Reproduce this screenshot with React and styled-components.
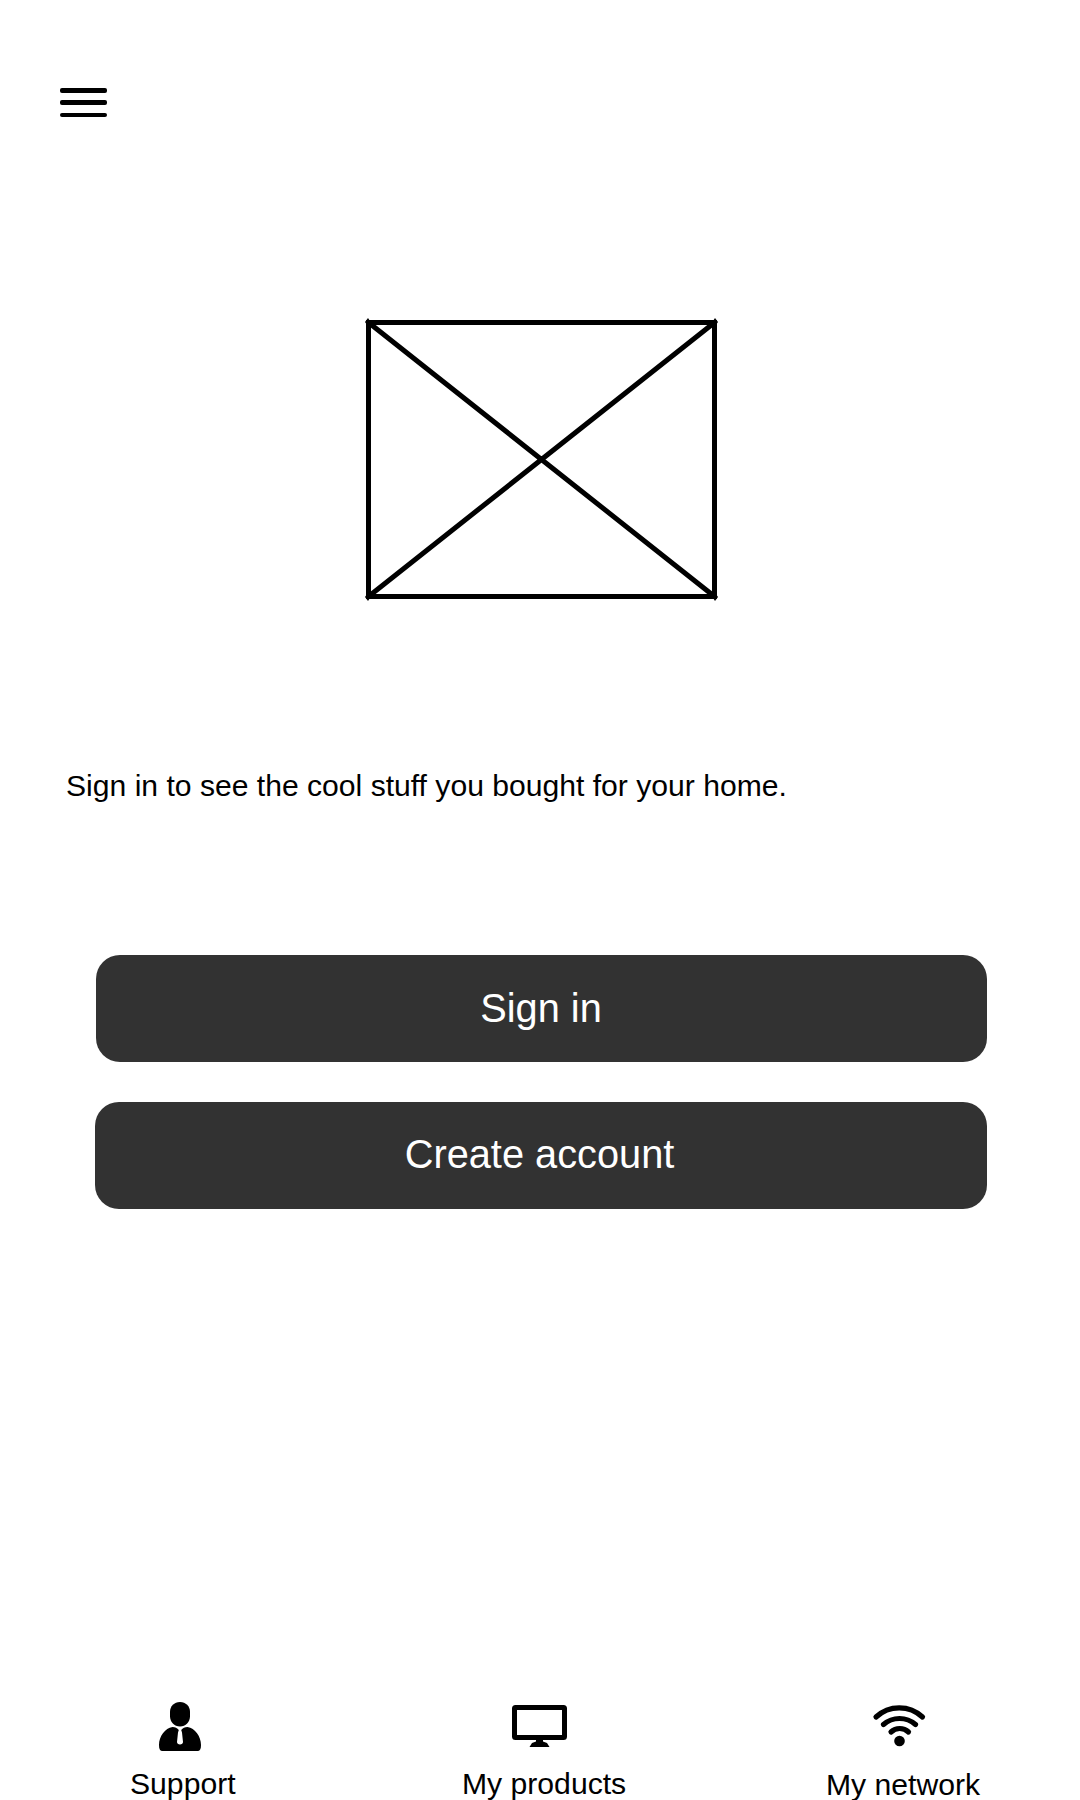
import React from "react";
import styled, { createGlobalStyle } from "styled-components";

const GlobalStyle = createGlobalStyle`
  * { box-sizing: border-box; }
  body {
    margin: 0;
    background: #fff;
    color: #000;
    font-family: "Liberation Sans", Arial, sans-serif;
  }
`;

const Screen = styled.div`
  width: 1080px;
  height: 1800px;
  display: flex;
  flex-direction: column;
  overflow: hidden;
  background: #fff;
`;

const Header = styled.header`
  padding: 88px 60px 0;
  height: 318px;
`;

const MenuButton = styled.button`
  display: block;
  padding: 0;
  border: 0;
  background: none;
`;

const Drawing = styled.svg`
  display: block;
  flex: none;
  overflow: visible;
`;

const Main = styled.main`
  flex: 1;
  display: flex;
  flex-direction: column;
`;

const Hero = styled.div`
  padding-left: 366px;
  height: 451px;
`;

const Message = styled.p`
  margin: 0;
  padding-left: 66px;
  height: 186px;
  font-size: 30.12px;
  line-height: 34px;
  white-space: nowrap;
`;

const Actions = styled.div`
  display: flex;
  flex-direction: column;
  align-items: flex-end;
  gap: 40px;
  padding-right: 93px;
`;

const ActionButton = styled.button`
  width: ${(p) => p.$width}px;
  height: 107px;
  padding: 0 ${(p) => p.$inset}px ${(p) => p.$lift}px 0;
  border: 0;
  border-radius: 24px;
  background: #323232;
  color: #fff;
  font-family: inherit;
  font-size: 39.75px;
  line-height: 46px;
`;

const Nav = styled.nav`
  display: grid;
  grid-template-columns: 332px 364px auto;
  height: 98px;
  padding-left: 130px;
`;

const NavItem = styled.div`
  display: flex;
  flex-direction: column;
  align-items: flex-start;
`;

const NavIcon = styled.div`
  height: 65px;
  padding-top: ${(p) => p.$top || 0}px;
  margin-left: ${(p) => p.$indent}px;
`;

const NavLabel = styled.span`
  font-size: 30.15px;
  line-height: 34px;
  white-space: nowrap;
  margin-top: ${(p) => p.$drop || 0}px;
`;

const MenuIcon = () => (
  <Drawing width="47" height="30" viewBox="0 0 47 30">
    <rect x="0" y="0" width="47" height="5" rx="2" />
    <rect x="0" y="12" width="47" height="5" rx="2" />
    <rect x="0" y="25" width="47" height="4" rx="2" />
  </Drawing>
);

const Placeholder = () => (
  <Drawing width="351" height="281" viewBox="366 318 351 281" fill="none" stroke="#000" strokeWidth="5">
    <rect x="368.5" y="322.5" width="346" height="274" />
    <path d="M368.5 322.5 714.5 596.5M714.5 322.5 368.5 596.5" strokeWidth="5" />
    <path
      d="M368 318 370 321 367 325 365 322ZM715 318 713 321 716 325 718 322ZM368 601 370 598 367 594 365 597ZM715 601 713 598 716 594 718 597Z"
      fill="#000"
      stroke="none"
    />
  </Drawing>
);

const PersonIcon = () => (
  <Drawing width="42" height="49" viewBox="159 1702 42 49">
    <path d="M180 1702c5.800 0 10 4.300 10 9.800v4.400c0 5.800-4.300 10.200-10 10.200s-10-4.400-10-10.200v-4.400c0-5.500 4.200-9.800 10-9.800z" />
    <path d="M172.500 1727c2.700 0 4.700 1.200 6.300 3l-.8 2.500-1 9.500c0 1.500 1.300 2.500 3 2.500s3-1 3-2.500l-1-9.500-.8-2.500c1.600-1.800 3.600-3 6.300-3 7.500 1 13.500 9.500 13.500 18 0 4-1 6-3.500 6h-35c-2.500 0-3.500-2-3.500-6 0-8.500 6-17 13.500-18z" />
  </Drawing>
);

const MonitorIcon = () => (
  <Drawing width="55" height="42" viewBox="512 1705 55 42">
    <rect x="514.5" y="1707.5" width="50" height="30" rx="1" fill="none" stroke="#000" strokeWidth="5" strokeLinejoin="round" />
    <path d="M536 1739h7v2.500l4 1.500 2.500 4h-20l2.500-4 4-1.500z" />
  </Drawing>
);

const WifiIcon = () => (
  <Drawing width="52" height="42" viewBox="873 1705 52 42">
    <g fill="none" stroke="#000" strokeWidth="5.2" strokeLinecap="round">
      <path d="M876 1717A34 34 0 0 1 922.500 1717" />
      <path d="M883.500 1724.500A24.300 24.300 0 0 1 915.500 1724.500" />
      <path d="M891 1732A12.700 12.700 0 0 1 908.500 1732" />
    </g>
    <circle cx="899.5" cy="1741" r="5.3" />
  </Drawing>
);

export default function App() {
  return (
    <>
      <GlobalStyle />
      <Screen>
        <Header>
          <MenuButton aria-label="Menu">
            <MenuIcon />
          </MenuButton>
        </Header>
        <Main>
          <Hero>
            <Placeholder />
          </Hero>
          <Message>Sign in to see the cool stuff you bought for your home.</Message>
          <Actions>
            <ActionButton $width={891} $inset={1} $lift={1}>Sign in</ActionButton>
            <ActionButton $width={892} $inset={3} $lift={3}>Create account</ActionButton>
          </Actions>
        </Main>
        <Nav>
          <NavItem>
            <NavIcon $indent={29}>
              <PersonIcon />
            </NavIcon>
            <NavLabel>Support</NavLabel>
          </NavItem>
          <NavItem>
            <NavIcon $indent={50} $top={3}>
              <MonitorIcon />
            </NavIcon>
            <NavLabel>My products</NavLabel>
          </NavItem>
          <NavItem>
            <NavIcon $indent={47} $top={3}>
              <WifiIcon />
            </NavIcon>
            <NavLabel $drop={1}>My network</NavLabel>
          </NavItem>
        </Nav>
      </Screen>
    </>
  );
}
